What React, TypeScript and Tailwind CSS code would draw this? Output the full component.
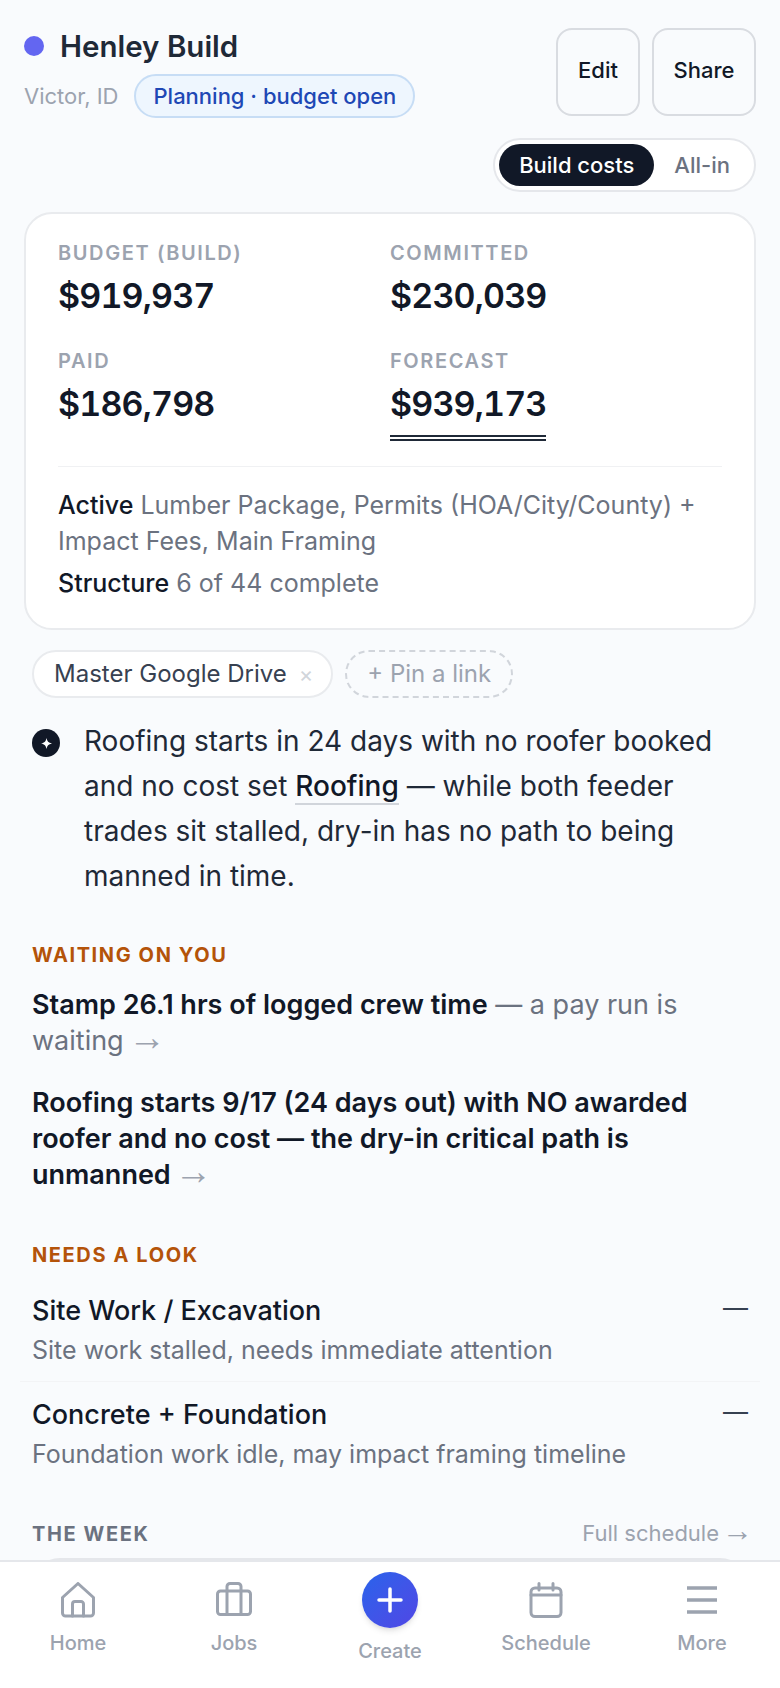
const F = "[font-family:Inter,'Noto_Sans',sans-serif]";

function HomeIcon() {
  return (
    <svg width="36" height="36" viewBox="0 0 36 36" fill="none" stroke="#9ca3af" strokeWidth="3" strokeLinejoin="round" strokeLinecap="round">
      <path d="M2.500 15.500 18 1.500l15.500 14V31a3 3 0 0 1-3 3h-25a3 3 0 0 1-3-3z" />
      <path d="M12.500 34V22a2.500 2.500 0 0 1 2.500-2.500h6a2.500 2.500 0 0 1 2.500 2.500v12" />
    </svg>
  );
}
function JobsIcon() {
  return (
    <svg width="36" height="36" viewBox="0 0 36 36" fill="none" stroke="#9ca3af" strokeWidth="3" strokeLinejoin="round" strokeLinecap="round">
      <rect x="1.500" y="9" width="33" height="23.500" rx="3" />
      <path d="M11 9V4.500a3 3 0 0 1 3-3h8a3 3 0 0 1 3 3V9M11 9v23.500M25 9v23.500" />
    </svg>
  );
}
function CalendarIcon() {
  return (
    <svg width="36" height="36" viewBox="0 0 36 36" fill="none" stroke="#9ca3af" strokeWidth="3" strokeLinejoin="round" strokeLinecap="round">
      <rect x="3" y="6" width="30" height="28.500" rx="4" />
      <path d="M3 13h30M11 1.500V8M25 1.500V8" />
    </svg>
  );
}
function MenuIcon() {
  return (
    <svg width="36" height="36" viewBox="0 0 36 36" fill="none" stroke="#9ca3af" strokeWidth="3.500" strokeLinecap="butt">
      <path d="M3 6h30M3 18h30M3 30h30" />
    </svg>
  );
}

function Arrow() {
  return <span className="-ml-[3px] -mr-[5px] font-normal text-[1.4em] leading-[0] text-[#9ca3af] [font-family:'Liberation_Sans',sans-serif]">→</span>;
}

function Stat({ label, value, forecast }: { label: string; value: string; forecast?: boolean }) {
  return (
    <div>
      <div className="text-[20px] leading-[26px] font-semibold tracking-[1.6px] text-[#9ca3af]">{label}</div>
      <div className="mt-[8px] text-[34px] leading-[44px] font-semibold tabular-nums tracking-[-0.85px] text-[#111827]">
        {forecast ? <span className="inline-block border-b-[6px] border-double border-[#1f2937] pb-[9px]">{value}</span> : value}
      </div>
    </div>
  );
}

function NavItem({ icon, label }: { icon: React.ReactNode; label: string }) {
  return (
    <div className="flex flex-col items-center w-[156px]">
      <div className="h-[36px] mt-[20px]">{icon}</div>
      <div className="mt-[12px] text-[20px] leading-[26px] font-medium text-[#9ca3af]">{label}</div>
    </div>
  );
}

function NeedRow({ title, sub, border }: { title: string; sub: string; border?: boolean }) {
  return (
    <div className={"flex justify-between px-[12px] h-[104px] pt-[15px] " + (border ? "border-b border-[#f3f4f6]" : "")}>
      <div>
        <div className="text-[27px] leading-[36px] font-medium text-[#111827]">{title}</div>
        <div className="mt-[5px] text-[25px] leading-[32px] text-[#6b7280]">{sub}</div>
      </div>
      <div className="text-[25px] leading-[30px] text-[#374151]">—</div>
    </div>
  );
}

export default function App() {
  return (
    <div className={F + " w-[780px] h-[1688px] bg-[#f9fbfd] flex flex-col overflow-hidden"}>
      <main className="flex-1 overflow-hidden">
        <header className="flex justify-between pl-[24px] pr-[24px] pt-[28px]">
          <div>
            <div className="flex items-center gap-[16px] h-[36px]">
              <span className="w-[20px] h-[20px] rounded-full bg-[#6366f1]" />
              <span className="text-[29.500px] leading-[36px] font-semibold text-[#1f2937]">Henley Build</span>
            </div>
            <div className="flex items-center gap-[16px] mt-[10px]">
              <span className="text-[22px] text-[#9ca3af]">Victor, ID</span>
              <span className="h-[44px] px-[17px] rounded-full border-2 border-[#c7ddf5] bg-[#eef6fe] text-[#1e48b5] text-[22px] font-medium leading-[40px]">Planning · budget open</span>
            </div>
          </div>
          <div className="flex gap-[12px]">
            <button className="w-[84px] h-[88px] pb-[4px] rounded-[16px] border-2 border-[#d9dce1] text-[22px] font-medium text-[#111827]">Edit</button>
            <button className="w-[104px] h-[88px] pb-[4px] rounded-[16px] border-2 border-[#d9dce1] text-[22px] font-medium text-[#111827]">Share</button>
          </div>
        </header>
        <div className="flex justify-end pr-[24px] mt-[20px]">
          <div className="flex items-center p-[4px] h-[54px] rounded-full bg-white border-2 border-[#e5e7eb]">
            <span className="h-[42px] px-[20px] rounded-full bg-[#111827] text-white text-[22px] font-medium leading-[42px]">Build costs</span>
            <span className="px-[20px] text-[22px] font-medium text-[#6b7280]">All-in</span>
          </div>
        </div>
        <section className="mx-[24px] mt-[20px] rounded-[28px] bg-white border-2 border-[#e9ebee] px-[32px] pt-[26px] pb-[27px]">
          <div className="grid grid-cols-[332px_1fr] gap-y-[30px]">
            <Stat label="BUDGET (BUILD)" value="$919,937" />
            <Stat label="COMMITTED" value="$230,039" />
            <Stat label="PAID" value="$186,798" />
            <Stat label="FORECAST" value="$939,173" forecast />
          </div>
          <div className="border-t border-[#f0f1f3] mt-[25px] pt-[20px] text-[25px] leading-[36px] text-[#6b7280]">
            <div><span className="font-medium text-[#111827]">Active</span> Lumber Package, Permits (HOA/City/County) + Impact Fees, Main Framing</div>
            <div className="mt-[6px]"><span className="font-medium text-[#111827]">Structure</span> 6 of 44 complete</div>
          </div>
        </section>
        <div className="flex gap-[12px] px-[32px] mt-[20px]">
          <span className="flex items-center h-[48px] pl-[20px] pr-[18px] rounded-full bg-white border-2 border-[#e9ebee] text-[24px] text-[#374151]">Master Google Drive <span className="ml-[12px] text-[22px] text-[#d1d5db]">×</span></span>
          <span className="flex items-center h-[48px] px-[20px] rounded-full border-2 border-dashed border-[#d1d5db] text-[24px] text-[#9ca3af]">+ Pin a link</span>
        </div>
        <div className="flex px-[32px] mt-[21px]">
          <span className="mt-[10px] flex-none w-[28px] h-[28px] rounded-full bg-[#111827] flex items-center justify-center">
            <svg width="11" height="11" viewBox="0 0 14 14" fill="#fff"><path d="M7 0c.6 4 2.400 6 7 7-4.600 1-6.400 3-7 7-.6-4-2.400-6-7-7 4.600-1 6.400-3 7-7z" /></svg>
          </span>
          <p className="ml-[24px] text-[28px] leading-[45px] text-[#1f2937]">
            Roofing starts in 24 days with no roofer booked and no cost set <span className="font-medium text-[#111827] border-b-2 border-[#d1d5db]">Roofing</span> — while both feeder trades sit stalled, dry-in has no path to being manned in time.
          </p>
        </div>
        <div className="px-[32px] mt-[44px]">
          <div className="text-[20px] leading-[24px] font-bold tracking-[1.6px] text-[#b45309]">WAITING ON YOU</div>
          <p className="mt-[20px] text-[27px] leading-[36px] text-[#6b7280]"><span className="font-semibold text-[#111827]">Stamp 26.1 hrs of logged crew time</span> — a pay run is waiting <Arrow /></p>
          <p className="mt-[26px] text-[27px] leading-[36px] font-semibold text-[#111827]">Roofing starts 9/17 (24 days out) with NO awarded roofer and no cost — the dry-in critical path is unmanned <Arrow /></p>
          <div className="mt-[50px] text-[20px] leading-[24px] font-bold tracking-[1.6px] text-[#b45309]">NEEDS A LOOK</div>
        </div>
        <div className="mt-[11px] mx-[20px]">
          <NeedRow title="Site Work / Excavation" sub="Site work stalled, needs immediate attention" border />
          <NeedRow title="Concrete + Foundation" sub="Foundation work idle, may impact framing timeline" />
        </div>
        <div className="flex justify-between items-center px-[32px] mt-[31px]">
          <span className="text-[20px] leading-[24px] font-bold tracking-[1.6px] text-[#6b7280]">THE WEEK</span>
          <span className="whitespace-nowrap text-[22px] text-[#9ca3af]">Full schedule <Arrow /></span>
        </div>
        <div className="mx-[32px] mt-[8px] h-[100px] rounded-[28px] bg-white border-2 border-[#e5e7eb]" />
      </main>
      <nav className="relative flex-none h-[128px] bg-white border-t-2 border-[#e5e7eb] flex">
        <NavItem icon={<HomeIcon />} label="Home" />
        <NavItem icon={<JobsIcon />} label="Jobs" />
        <div className="flex flex-col items-center w-[156px]">
          <div className="mt-[10px] w-[56px] h-[56px] rounded-full bg-gradient-to-br from-[#2563eb] to-[#4f46e5] flex items-center justify-center shadow-md">
            <svg width="28" height="28" viewBox="0 0 28 28" stroke="#fff" strokeWidth="3.500" strokeLinecap="round"><path d="M14 3v22M3 14h22" /></svg>
          </div>
          <div className="mt-[10px] text-[20px] leading-[26px] font-medium text-[#9ca3af]">Create</div>
        </div>
        <NavItem icon={<CalendarIcon />} label="Schedule" />
        <NavItem icon={<MenuIcon />} label="More" />
      </nav>
    </div>
  );
}
